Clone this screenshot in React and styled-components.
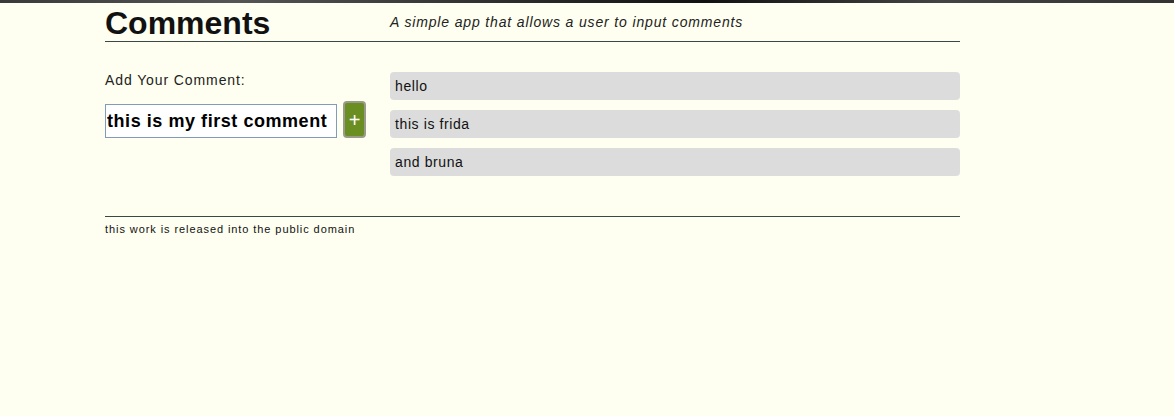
import React, { useState } from "react";
import styled, { createGlobalStyle } from "styled-components";

const GlobalStyle = createGlobalStyle`
  html, body {
    margin: 0;
    padding: 0;
    background: #fefff0;
    font-family: "Liberation Sans", Arial, sans-serif;
    color: #111;
  }
`;

const TopBar = styled.div`
  height: 3px;
  background: linear-gradient(90deg, #3a3a3a 0%, #555 20%, #2a2a2a 45%, #111 60%, #444 80%, #333 100%);
`;

const Page = styled.div`
  width: 855px;
  margin-left: 105px;
`;

const Header = styled.header`
  display: grid;
  grid-template-columns: 285px 1fr;
  align-items: start;
  border-bottom: 1px solid #3b4848;
  padding-top: 3px;
  height: 39px;
  box-sizing: border-box;
`;

const Title = styled.h1`
  margin: 0;
  font-size: 32px;
  font-weight: bold;
  line-height: 34px;
`;

const Tagline = styled.p`
  margin: 0;
  padding-top: 8px;
  font-size: 14px;
  line-height: 16px;
  font-style: italic;
  letter-spacing: 0.85px;
  color: #222;
`;

const Main = styled.main`
  display: grid;
  grid-template-columns: 285px 1fr;
  padding-top: 30px;
  padding-bottom: 40px;
  border-bottom: 1px solid #3b4848;
`;

const Label = styled.label`
  display: block;
  font-size: 14px;
  line-height: 16px;
  letter-spacing: 0.9px;
  color: #222;
`;

const Form = styled.form`
  display: flex;
  align-items: flex-end;
  gap: 6px;
  margin-top: 13px;
`;

const Input = styled.input`
  width: 232px;
  height: 34px;
  box-sizing: border-box;
  border: 1px solid #7f9db9;
  background: #fff;
  padding: 0 1px;
  font-family: "Liberation Sans", Arial, sans-serif;
  font-size: 18px;
  font-weight: bold;
  letter-spacing: 0.55px;
  color: #000;
  outline: none;
`;

const AddButton = styled.button`
  width: 23px;
  height: 37px;
  box-sizing: border-box;
  border: 2px solid #9a9a8a;
  border-radius: 4px;
  background: #6b8e23;
  color: #fff;
  font-family: "Liberation Sans", Arial, sans-serif;
  font-size: 20px;
  line-height: 1;
  padding: 0;
  display: flex;
  align-items: center;
  justify-content: center;
`;

const List = styled.ul`
  list-style: none;
  margin: 0;
  padding: 0;
  display: flex;
  flex-direction: column;
  gap: 10px;
`;

const Item = styled.li`
  background: #dcdcdc;
  border-radius: 4px;
  height: 28px;
  line-height: 28px;
  padding: 0 5px;
  font-size: 14px;
  letter-spacing: 0.6px;
  color: #111;
`;

const Footer = styled.footer`
  font-size: 11px;
  line-height: 13px;
  padding-top: 6px;
  color: #111;
  letter-spacing: 0.92px;
`;

export default function App() {
  const [text, setText] = useState("this is my first comment");
  const [comments, setComments] = useState(["hello", "this is frida", "and bruna"]);

  const add = (e) => {
    e.preventDefault();
    if (!text.trim()) return;
    setComments([...comments, text]);
    setText("");
  };

  return (
    <>
      <GlobalStyle />
      <TopBar />
      <Page>
        <Header>
          <Title>Comments</Title>
          <Tagline>A simple app that allows a user to input comments</Tagline>
        </Header>
        <Main>
          <div>
            <Label htmlFor="comment">Add Your Comment:</Label>
            <Form onSubmit={add}>
              <Input id="comment" value={text} onChange={(e) => setText(e.target.value)} />
              <AddButton type="submit">+</AddButton>
            </Form>
          </div>
          <List>
            {comments.map((c, i) => (
              <Item key={i}>{c}</Item>
            ))}
          </List>
        </Main>
        <Footer>this work is released into the public domain</Footer>
      </Page>
    </>
  );
}
